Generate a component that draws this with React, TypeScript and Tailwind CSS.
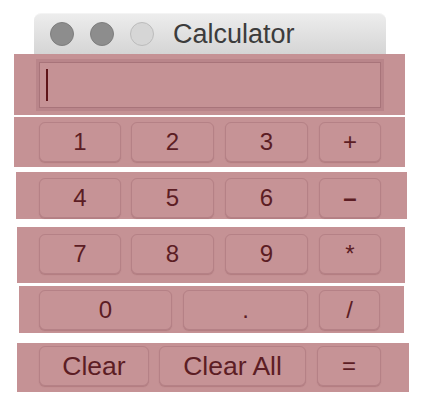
import React from "react";

type Btn = { label: string; w: string; size?: string };

function Key({ label, w, size = "text-[24px]" }: Btn) {
  return (
    <button
      className={`${w} h-[40px] rounded-[6px] border border-[#b58186] bg-[#c69396] shadow-[0_1px_1px_rgba(120,60,66,0.25)] ${size} leading-none text-[#5c1d24]`}
    >
      {label}
    </button>
  );
}

function Row({
  className,
  children,
}: {
  className: string;
  children: React.ReactNode;
}) {
  return <div className={`flex bg-[#c59295] ${className}`}>{children}</div>;
}

export default function App() {
  return (
    <div
      className="w-[425px] h-[411px] bg-white pt-[13px]"
      style={{ fontFamily: '"Liberation Sans", Arial, sans-serif' }}
    >
      {/* title bar */}
      <div className="ml-[34px] w-[352px] h-[41px] rounded-t-[7px] bg-gradient-to-b from-[#ededed] to-[#d5d5d5] border-t border-[#f4f4f4] flex items-center pl-[16px]">
        <div className="flex gap-[16px]">
          <span className="w-[24px] h-[24px] rounded-full bg-[#8d8d8d] border border-[#7e7e7e]" />
          <span className="w-[24px] h-[24px] rounded-full bg-[#8d8d8d] border border-[#7e7e7e]" />
          <span className="w-[24px] h-[24px] rounded-full bg-[#d6d6d6] border border-[#bcbcbc]" />
        </div>
        <span className="ml-[19px] text-[27px] leading-none text-[#3c3c3c]">
          Calculator
        </span>
      </div>

      {/* display */}
      <Row className="ml-[14px] w-[391px] h-[61px] pl-[22px] pt-[5px]">
        <div className="w-[348px] h-[52px] border-[3px] border-[#b9858a] bg-[#c59295]">
          <div className="w-full h-full border border-[#a8747a] pl-[6px] pt-[6px]">
            <div className="w-[2px] h-[32px] bg-[#5e1519]" />
          </div>
        </div>
      </Row>

      <Row className="mt-[2px] ml-[14px] w-[391px] h-[50px] pl-[25px] pt-[5px]">
        <div className="flex gap-[10px]">
          <Key label="1" w="w-[82px]" />
          <Key label="2" w="w-[83px]" />
        </div>
        <div className="flex gap-[11px] ml-[11px]">
          <Key label="3" w="w-[83px]" />
          <Key label="+" w="w-[62px]" />
        </div>
      </Row>

      <Row className="mt-[5px] ml-[16px] w-[391px] h-[47px] pl-[23px] pt-[6px]">
        <div className="flex gap-[10px]">
          <Key label="4" w="w-[82px]" />
          <Key label="5" w="w-[83px]" />
        </div>
        <div className="flex gap-[11px] ml-[11px]">
          <Key label="6" w="w-[83px]" />
          <Key label="–" w="w-[62px]" size="text-[24px] font-bold" />
        </div>
      </Row>

      <Row className="mt-[8px] ml-[17px] w-[388px] h-[56px] pl-[22px] pt-[7px]">
        <div className="flex gap-[10px]">
          <Key label="7" w="w-[82px]" />
          <Key label="8" w="w-[83px]" />
        </div>
        <div className="flex gap-[11px] ml-[11px]">
          <Key label="9" w="w-[83px]" />
          <Key label="*" w="w-[62px]" />
        </div>
      </Row>

      <Row className="mt-[3px] ml-[19px] w-[385px] h-[47px] pl-[20px] pt-[4px] gap-[11px]">
        <Key label="0" w="w-[133px]" />
        <Key label="." w="w-[125px]" />
        <Key label="/" w="w-[61px]" />
      </Row>

      <Row className="mt-[10px] ml-[17px] w-[392px] h-[49px] pl-[22px] pt-[3px]">
        <Key label="Clear" w="w-[110px]" size="text-[26.5px]" />
        <div className="ml-[10px]">
          <Key label="Clear All" w="w-[147px]" size="text-[26.5px]" />
        </div>
        <div className="ml-[11px]">
          <Key label="=" w="w-[64px]" />
        </div>
      </Row>
    </div>
  );
}
